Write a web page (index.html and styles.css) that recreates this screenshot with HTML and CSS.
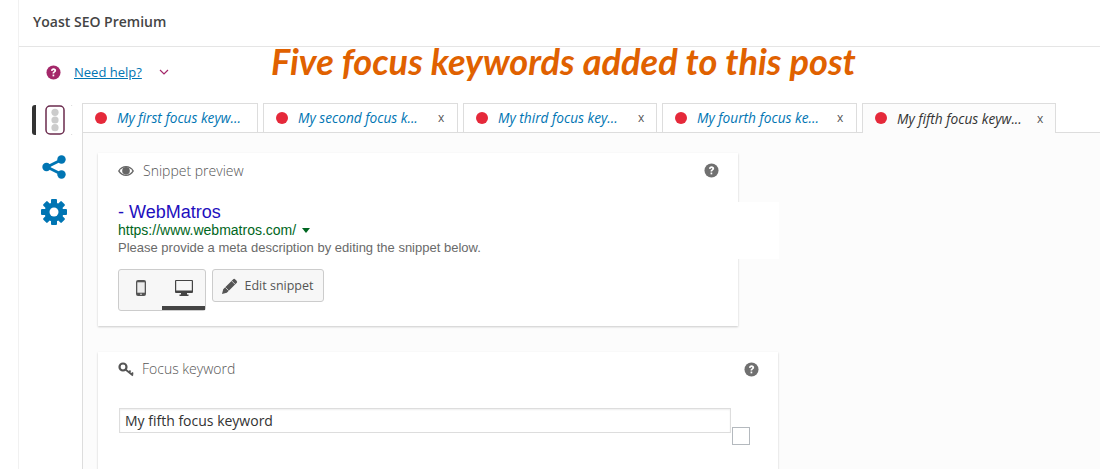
FILE: index.html
```html
<!DOCTYPE html>
<html lang="en">
<head>
    <meta charset="UTF-8">
    <meta name="viewport" content="width=device-width, initial-scale=1.0">
    <title>Yoast SEO Premium</title>
    <link rel="stylesheet" href="styles.css">
</head>
<body>
    <div class="metabox">
        <h2 class="metabox-title">Yoast SEO Premium</h2>

        <!-- annotation over the screenshot -->
        <div class="annotation">Five focus keywords added to this post</div>

        <div class="help-row">
            <svg class="help-icon" viewBox="0 0 16 16"><circle cx="8" cy="8" r="7.500" fill="#a4286a"/><path d="M5.300 6.200c0-1.700 1.200-2.700 2.800-2.700s2.700 1 2.700 2.400c0 1.100-.7 1.600-1.400 2.100-.5.300-.7.600-.7 1.100H7c0-1.100.3-1.700 1.100-2.200.5-.3.700-.6.700-.9 0-.5-.3-.7-.8-.7-.6 0-.9.400-1 1z" fill="#fff"/><rect x="7" y="10.200" width="1.800" height="1.900" fill="#fff"/></svg>
            <a class="help-link" href="#">Need help?</a>
            <svg class="help-caret" viewBox="0 0 10 6"><path d="M1 1l4 4 4-4" fill="none" stroke="#a4286a" stroke-width="1.200"/></svg>
        </div>

        <div class="editor">
            <nav class="side-nav">
                <div class="side-item side-item-active">
                    <svg class="lights-icon" viewBox="0 0 20 30"><rect x="1" y="1" width="18" height="28" rx="4" fill="#fff" stroke="#6b2b4e" stroke-width="1.500"/><circle cx="10" cy="7.300" r="3.600" fill="#ccc"/><circle cx="10" cy="15" r="3.600" fill="#ccc"/><circle cx="10" cy="22.700" r="3.600" fill="#ccc"/></svg>
                </div>
                <div class="side-item">
                    <svg class="share-icon" viewBox="0 0 24 24"><path d="M19 5L5 12l14 7" fill="none" stroke="#0075b3" stroke-width="2.800"/><circle cx="19.500" cy="4.500" r="4.200" fill="#0075b3"/><circle cx="4.500" cy="12" r="4.200" fill="#0075b3"/><circle cx="19.500" cy="19.500" r="4.200" fill="#0075b3"/></svg>
                </div>
                <div class="side-item">
                    <svg class="gear-icon" viewBox="0 0 26 26">
                        <g fill="#0075b3">
                            <rect x="10" y="0" width="6" height="26" rx="1"/>
                            <rect x="10" y="0" width="6" height="26" rx="1" transform="rotate(45 13 13)"/>
                            <rect x="10" y="0" width="6" height="26" rx="1" transform="rotate(90 13 13)"/>
                            <rect x="10" y="0" width="6" height="26" rx="1" transform="rotate(135 13 13)"/>
                        </g>
                        <circle cx="13" cy="13" r="7" fill="none" stroke="#0075b3" stroke-width="5"/>
                        <circle cx="13" cy="13" r="4.500" fill="#fff"/>
                    </svg>
                </div>
            </nav>

            <div class="content">
                <div class="tabs">
                    <div class="tab tab-first"><span class="dot"></span><span class="tab-label">My first focus keyw...</span></div>
                    <div class="tab"><span class="dot"></span><span class="tab-label">My second focus k...</span><span class="tab-close">x</span></div>
                    <div class="tab tab-third"><span class="dot"></span><span class="tab-label">My third focus key...</span><span class="tab-close">x</span></div>
                    <div class="tab"><span class="dot"></span><span class="tab-label">My fourth focus ke...</span><span class="tab-close">x</span></div>
                    <div class="tab tab-active"><span class="dot"></span><span class="tab-label">My fifth focus keyw...</span><span class="tab-close">x</span></div>
                </div>

                <div class="panel">
                    <section class="card card-snippet">
                        <header class="card-head">
                            <svg class="eye-icon" viewBox="0 0 18 12"><path d="M0 6C2.200 2.200 5.400.4 9 .4s6.800 1.800 9 5.600c-2.200 3.800-5.400 5.600-9 5.600S2.200 9.800 0 6z" fill="#666"/><path d="M1.800 6C3.700 3.300 6.200 1.900 9 1.900s5.300 1.400 7.200 4.100c-1.900 2.700-4.400 4.100-7.200 4.100S3.700 8.700 1.800 6z" fill="#fff"/><circle cx="9" cy="5.800" r="4.300" fill="#666"/></svg>
                            <span class="card-title">Snippet preview</span>
                            <svg class="tip-icon" viewBox="0 0 16 16"><circle cx="8" cy="8" r="7.500" fill="#707070"/><path d="M5.300 6.200c0-1.700 1.200-2.700 2.800-2.700s2.700 1 2.700 2.400c0 1.100-.7 1.600-1.400 2.100-.5.300-.7.600-.7 1.100H7c0-1.100.3-1.700 1.100-2.200.5-.3.700-.6.700-.9 0-.5-.3-.7-.8-.7-.6 0-.9.400-1 1z" fill="#fff"/><rect x="7" y="10.200" width="1.800" height="1.900" fill="#fff"/></svg>
                        </header>
                        <div class="snippet">
                            <div class="snippet-title">- WebMatros</div>
                            <div class="snippet-url">https://www.webmatros.com/<span class="url-caret"></span></div>
                            <div class="snippet-desc">Please provide a meta description by editing the snippet below.</div>
                        </div>
                        <div class="snippet-actions">
                            <div class="device-switch">
                                <div class="device">
                                    <svg class="phone-icon" viewBox="0 0 10 16"><rect x="0" y="0" width="10" height="16" rx="2" fill="#555"/><rect x="1.300" y="2.300" width="7.400" height="10.400" fill="#ececec"/><circle cx="5" cy="14.300" r=".8" fill="#ececec"/></svg>
                                </div>
                                <div class="device device-active">
                                    <svg class="desktop-icon" viewBox="0 0 18 16"><path fill-rule="evenodd" d="M1 0h16a1 1 0 0 1 1 1v11a1 1 0 0 1-1 1h-5v1.500h1.500V16h-9v-1.500H6V13H1a1 1 0 0 1-1-1V1a1 1 0 0 1 1-1zm.2 1v9.500h15.600V1z" fill="#444"/></svg>
                                </div>
                            </div>
                            <button class="edit-btn">
                                <svg class="pencil-icon" viewBox="0 0 16 16"><path d="M0 16l1.200-4.800L11 1.400a1.600 1.600 0 0 1 2.300 0l1.300 1.300a1.600 1.600 0 0 1 0 2.300L4.800 14.800z" fill="#555"/><path d="M9.700 2.900l3.400 3.400M3.400 9.400l3.200 3.200" fill="none" stroke="#f7f7f7" stroke-width=".7"/></svg>
                                Edit snippet
                            </button>
                        </div>
                    </section>

                    <section class="card card-keyword">
                        <header class="card-head card-head-keyword">
                            <svg class="key-icon" viewBox="0 0 16 15"><circle cx="5" cy="5" r="3.500" fill="none" stroke="#555" stroke-width="2.200"/><path d="M7.500 7.500l7.500 6M11 10.300l1.500-1.800M13.500 12.300l1.500-1.800" fill="none" stroke="#555" stroke-width="1.800"/></svg>
                            <span class="card-title">Focus keyword</span>
                            <svg class="tip-icon" viewBox="0 0 16 16"><circle cx="8" cy="8" r="7.500" fill="#707070"/><path d="M5.300 6.200c0-1.700 1.200-2.700 2.800-2.700s2.700 1 2.700 2.400c0 1.100-.7 1.600-1.400 2.100-.5.300-.7.600-.7 1.100H7c0-1.100.3-1.700 1.100-2.200.5-.3.700-.6.700-.9 0-.5-.3-.7-.8-.7-.6 0-.9.400-1 1z" fill="#fff"/><rect x="7" y="10.200" width="1.800" height="1.900" fill="#fff"/></svg>
                        </header>
                        <div class="keyword-row">
                            <input class="keyword-input" type="text" value="My fifth focus keyword">
                            <span class="keyword-check"></span>
                        </div>
                    </section>
                </div>
            </div>
        </div>
    </div>
</body>
</html>
```

FILE: styles.css
```css
* {
    margin: 0;
    padding: 0;
    box-sizing: border-box;
}

html, body {
    height: 469px;
    overflow: hidden;
}

body {
    background: #fff;
    font-family: "Open Sans", sans-serif;
    color: #444;
}

.metabox {
    position: relative;
    height: 469px;
    margin-left: 18px;
    border-left: 1px solid #f1f1f1;
    display: flex;
    flex-direction: column;
}

.metabox-title {
    height: 47px;
    padding: 14px 0 0 14px;
    border-bottom: 1px solid #e5e5e5;
    font-size: 14px;
    line-height: 16px;
    font-weight: 600;
    color: #444;
}

/* orange caption on top of the box */
.annotation {
    position: absolute;
    left: 252px;
    top: 40px;
    font-family: Lato, sans-serif;
    font-size: 36.2px;
    line-height: 43px;
    font-weight: 700;
    font-style: italic;
    color: #e06100;
    white-space: nowrap;
}

.help-row {
    height: 56px;
    padding: 0 0 6px 27px;
    display: flex;
    align-items: center;
}

.help-icon {
    width: 15px;
    height: 15px;
}

.help-link {
    margin-left: 13px;
    font-size: 13px;
    color: #0075b3;
}

.help-caret {
    width: 10px;
    height: 6px;
    margin-left: 17px;
}

.editor {
    flex: 1;
    display: flex;
    min-height: 0;
}

.side-nav {
    width: 63px;
    padding-left: 13px;
    flex-shrink: 0;
}

.side-item {
    height: 45px;
    padding-left: 10px;
    display: flex;
    align-items: center;
}

.side-item-active {
    width: 41px;
    height: 30px;
    margin: 2px 0 9px;
    border-left: 4px solid #333;
    border-radius: 3px;
    padding-left: 9px;
    background:
        linear-gradient(#ccc, #ccc) right top / 2px 1px no-repeat,
        linear-gradient(#ccc, #ccc) right bottom / 2px 1px no-repeat;
}

.lights-icon {
    width: 20px;
    height: 30px;
}

.share-icon {
    width: 24px;
    height: 24px;
}

.gear-icon {
    width: 26px;
    height: 26px;
    margin-left: -1px;
}

.content {
    flex: 1;
    display: flex;
    flex-direction: column;
    min-width: 0;
}

.tabs {
    height: 30px;
    display: flex;
    gap: 5px;
    border-bottom: 1px solid #ddd;
}

.tab {
    width: 195px;
    height: 30px;
    padding: 0 0 1px 12px;
    border: 1px solid #ddd;
    display: flex;
    align-items: center;
    font-size: 13.7px;
    font-style: italic;
    color: #0075b3;
    background: #fff;
    flex-shrink: 0;
}

.tab-first {
    width: 176px;
}

.tab-third {
    width: 194px;
}

.tab-active {
    width: 194px;
    height: 31px;
    padding-bottom: 2px;
    border-bottom: 0;
    background: #fcfcfc;
    color: #333;
}

.dot {
    width: 12px;
    height: 12px;
    border-radius: 50%;
    background: #e5293a;
    flex-shrink: 0;
}

.tab-label {
    width: 126px;
    margin-left: 10px;
    white-space: nowrap;
}

.tab-close {
    margin-left: 14px;
    font-size: 12px;
    font-style: normal;
    color: #555;
}

.panel {
    flex: 1;
    padding: 20px 0 0 15px;
    background: #fcfcfc;
    border-left: 1px solid #ddd;
}

.card {
    background: #fff;
    box-shadow: 0 1px 2px rgba(0, 0, 0, 0.2);
}

.card-snippet {
    width: 640px;
    height: 173px;
    margin-bottom: 26px;
}

.card-keyword {
    width: 680px;
    height: 130px;
}

.card-head {
    height: 35px;
    padding: 0 19px 0 20px;
    display: flex;
    align-items: center;
    font-size: 14px;
    font-weight: 300;
    color: #555;
}

.card-head-keyword .card-title {
    margin-top: -2px;
}

.card-title {
    margin-left: 9px;
    flex: 1;
}

.eye-icon {
    width: 16px;
    height: 12px;
}

.key-icon {
    width: 16px;
    height: 15px;
    margin-right: -1px;
}

.tip-icon {
    width: 15px;
    height: 15px;
}

.snippet {
    width: 681px;
    height: 57px;
    margin-top: 14px;
    padding-left: 20px;
    background: #fff;
    font-family: "Liberation Sans", sans-serif;
}

.snippet-title {
    font-size: 18px;
    line-height: 20px;
    color: #1e0fbe;
}

.snippet-url {
    font-size: 14px;
    line-height: 16px;
    color: #006621;
}

.url-caret {
    display: inline-block;
    margin-left: 6px;
    vertical-align: 2px;
    border-top: 5px solid #006621;
    border-left: 4px solid transparent;
    border-right: 4px solid transparent;
}

.snippet-desc {
    margin-top: 2px;
    font-size: 13px;
    line-height: 16px;
    color: #6a6a6a;
}

.snippet-actions {
    margin-top: 10px;
    padding-left: 20px;
    display: flex;
    gap: 6px;
    align-items: flex-start;
}

.device-switch {
    width: 88px;
    height: 42px;
    border: 1px solid #ccc;
    border-radius: 3px;
    background: #f7f7f7;
    display: flex;
}

.device {
    width: 44px;
    height: 41px;
    display: flex;
    justify-content: center;
    padding-top: 10px;
}

.device-active {
    height: 40px;
    border-bottom: 4px solid #444;
}

.phone-icon {
    width: 10px;
    height: 16px;
}

.desktop-icon {
    width: 18px;
    height: 16px;
}

.edit-btn {
    width: 112px;
    height: 33px;
    border: 1px solid #ccc;
    border-radius: 3px;
    background: #f7f7f7;
    display: flex;
    align-items: center;
    justify-content: center;
    gap: 6px;
    font-family: "Open Sans", sans-serif;
    font-size: 12.5px;
    color: #555;
}

.pencil-icon {
    width: 16px;
    height: 16px;
}

.keyword-row {
    margin-top: 21px;
    padding-left: 21px;
    display: flex;
    align-items: flex-start;
}

.keyword-input {
    width: 612px;
    height: 25px;
    padding: 0 5px;
    border: 1px solid #ddd;
    font-family: "Open Sans", sans-serif;
    font-size: 14px;
    color: #333;
    box-shadow: inset 0 1px 2px rgba(0, 0, 0, 0.07);
}

.keyword-check {
    width: 18px;
    height: 18px;
    margin: 19px 0 0 1px;
    border: 1px solid #b4b9be;
    background: #fff;
}
```
